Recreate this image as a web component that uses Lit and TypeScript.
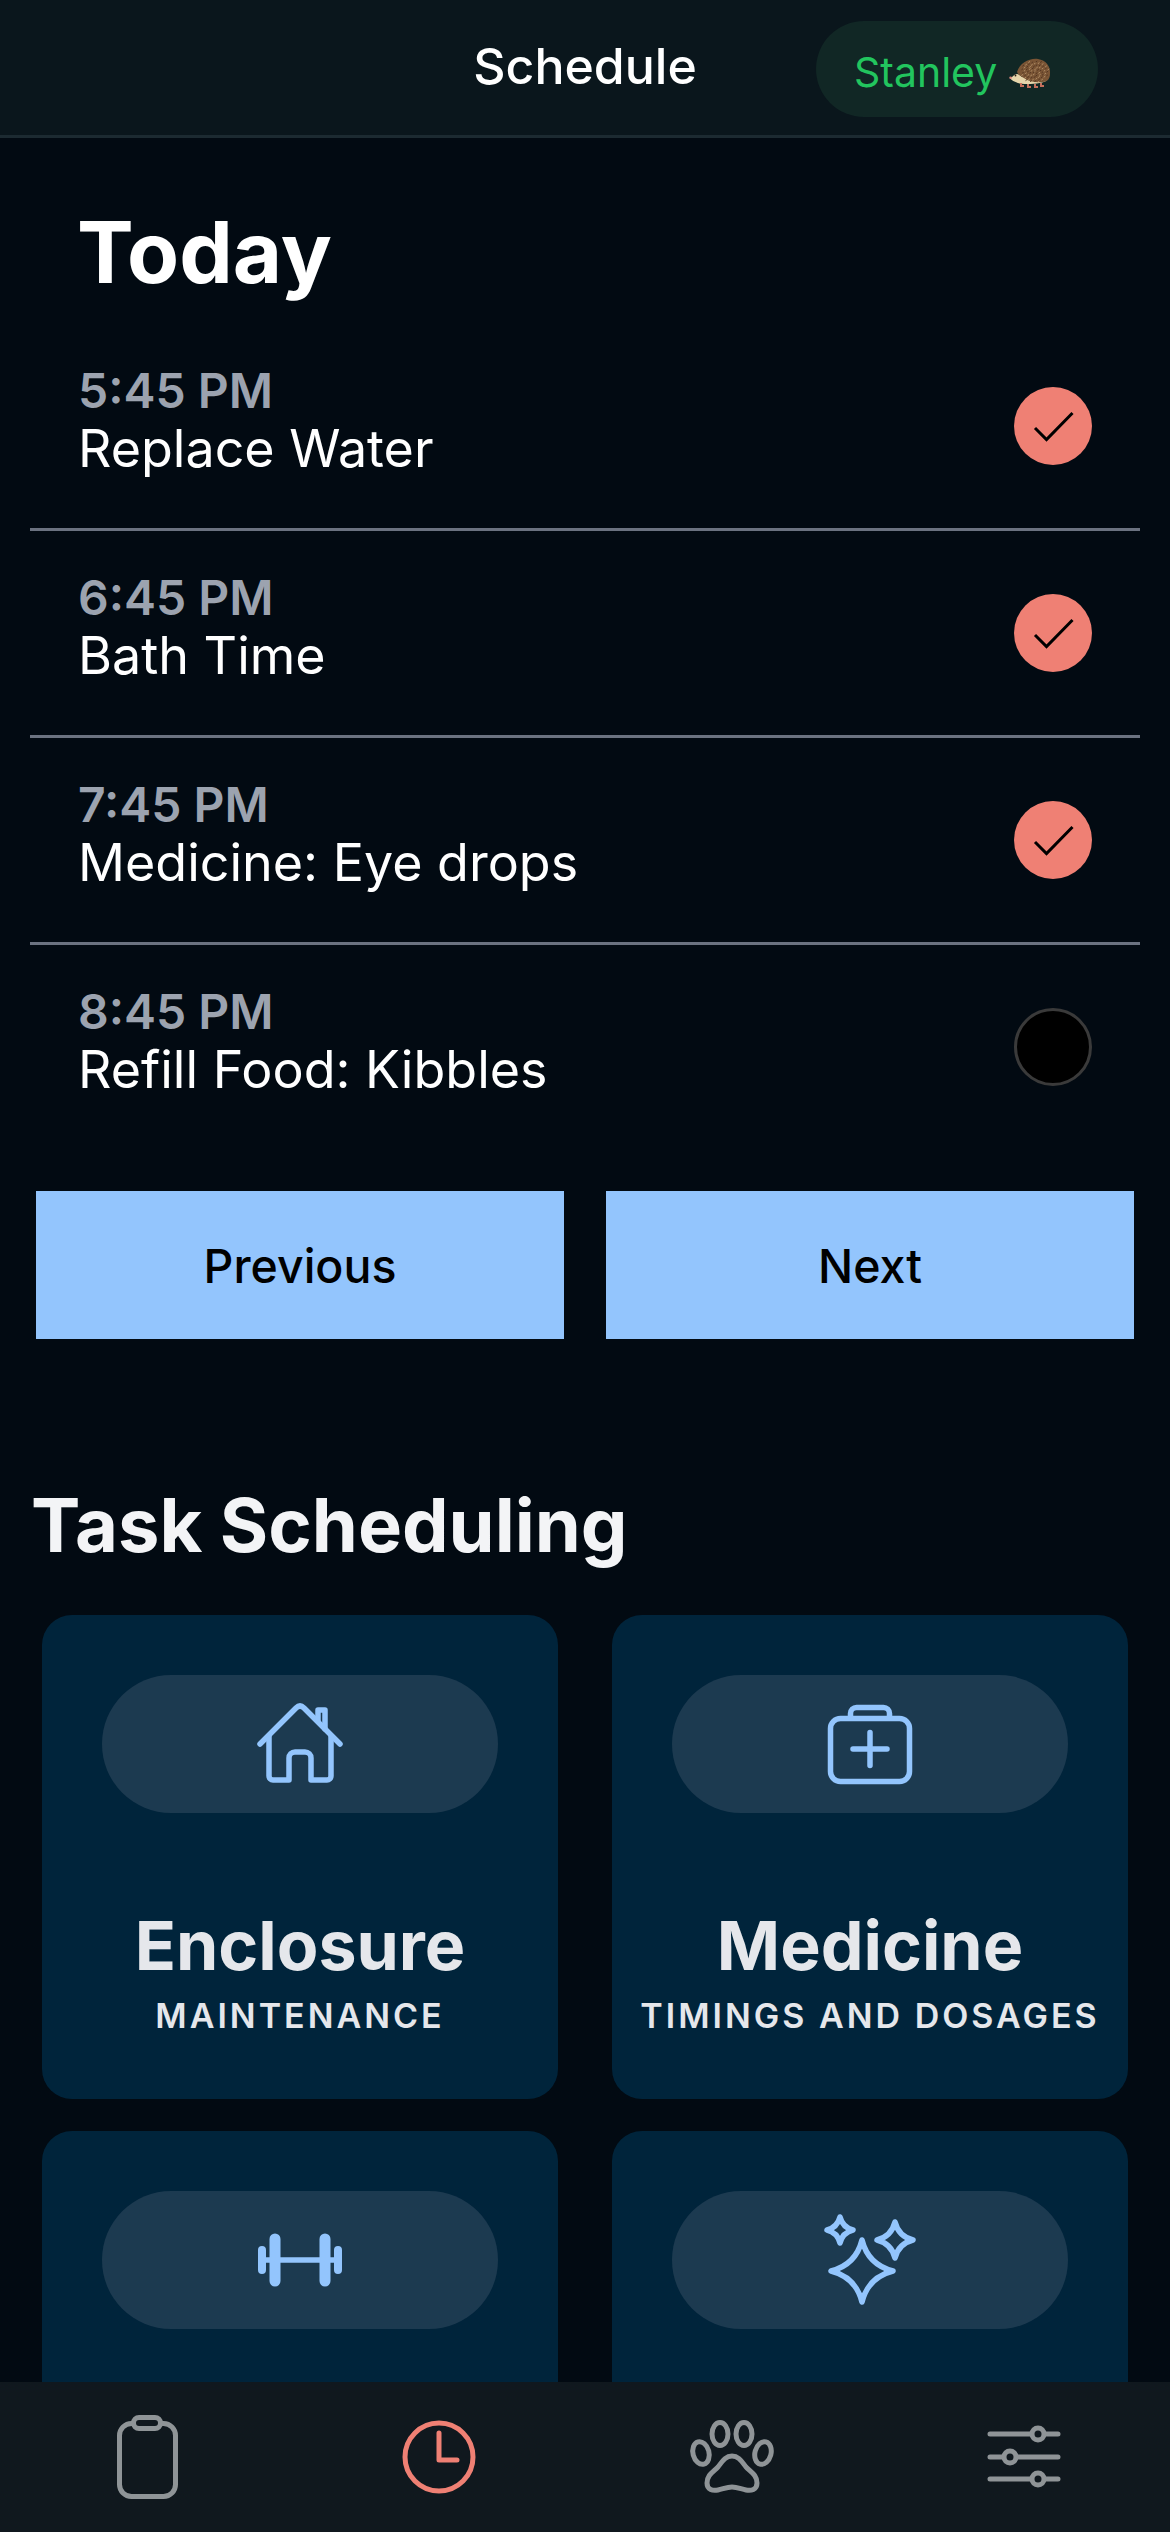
import { LitElement, html, css, svg } from "lit";
import { customElement } from "lit/decorators.js";

const star = (cx: number, cy: number, r: number, k = 0.2) => {
  const c = r * k;
  return `M${cx} ${cy - r}Q${cx + c} ${cy - c} ${cx + r} ${cy}Q${cx + c} ${cy + c} ${cx} ${cy + r}Q${cx - c} ${cy + c} ${cx - r} ${cy}Q${cx - c} ${cy - c} ${cx} ${cy - r}Z`;
};

const hedgehogSpikes = () => {
  const out = [];
  for (let i = 0; i < 70; i++) {
    const a = (i * 137.5 * Math.PI) / 180;
    const r = Math.sqrt(i / 70);
    const x = 25 + r * 14 * Math.cos(a);
    const y = 14 + r * 11 * Math.sin(a);
    out.push(svg`<line x1=${x.toFixed(1)} y1=${y.toFixed(1)} x2=${(x + 1.6).toFixed(1)} y2=${(y - 1.2).toFixed(1)} stroke=${i % 2 ? "#4f3320" : "#b3936c"} stroke-width="0.9"></line>`);
  }
  return out;
};

const hedgehog = html`<svg class="hog" viewBox="0 0 42 30" width="42" height="30" aria-hidden="true">
  <path d="M3 19 C7 15 9 15 13 19 L38 22 C36 26 14 27 9 25 C6 24 2 22 1 20Z" fill="#e6d5ab"></path>
  <path d="M8 14 C11 5 20 0 29 1 C37 2 42 9 41 16 C41 21 38 24 34 24 C28 25 20 24 15 20 C12 18 9 17 8 14Z" fill="#7a5535"></path>
  ${hedgehogSpikes()}
  <circle cx="1.6" cy="19.8" r="1.3" fill="#d98a80"></circle>
  <circle cx="6.5" cy="17.5" r="0.9" fill="#2a1a12"></circle>
  <path d="M12 25v3h3M19 26v3h3M26 26v3h3M32 25v3h3" stroke="#c46f5c" stroke-width="2" fill="none"></path>
</svg>`;

const check = html`<svg viewBox="0 0 78 78" width="78" height="78" aria-hidden="true">
  <path d="M21 41 L32.5 52.5 L58.5 26" fill="none" stroke="#000" stroke-width="3"></path>
</svg>`;

const ICONS = {
  house: html`<svg class="ic" viewBox="0 0 96 96" aria-hidden="true">
    <path d="M8 48 L44 12 Q48 8 52 12 L88 48"></path>
    <path d="M17 40 V80 a4 4 0 0 0 4 4 H37 V62 a6 6 0 0 1 6 -6 H53 a6 6 0 0 1 6 6 V84 H75 a4 4 0 0 0 4 -4 V40"></path>
    <path d="M66 25 V14 H73 V33"></path>
  </svg>`,
  kit: html`<svg class="ic" viewBox="0 0 96 96" aria-hidden="true">
    <rect x="8.5" y="22.5" width="79" height="63" rx="10"></rect>
    <path d="M28.5 22 V17.5 a6 6 0 0 1 6 -6 H61.5 a6 6 0 0 1 6 6 V22"></path>
    <path d="M48 36.5 V69.5 M31 53 H65"></path>
  </svg>`,
  dumbbell: html`<svg class="ic" viewBox="0 0 96 96" aria-hidden="true">
    <path d="M10 48 H86"></path>
    <path class="thick" d="M23 27 V69 M73 27 V69"></path>
    <path class="mid" d="M10 38 V58 M86 38 V58"></path>
  </svg>`,
  sparkles: html`<svg class="ic" viewBox="0 0 96 96" aria-hidden="true">
    <path d=${star(40, 59, 31)}></path>
    <path d=${star(18, 18, 13)}></path>
    <path d=${star(73, 28, 18)}></path>
  </svg>`,
};

const TASKS = [
  { time: "5:45 PM", title: "Replace Water", done: true },
  { time: "6:45 PM", title: "Bath Time", done: true },
  { time: "7:45 PM", title: "Medicine: Eye drops", done: true },
  { time: "8:45 PM", title: "Refill Food: Kibbles", done: false },
];

const CARDS = [
  { icon: ICONS.house, title: "Enclosure", sub: "MAINTENANCE" },
  { icon: ICONS.kit, title: "Medicine", sub: "TIMINGS AND DOSAGES" },
  { icon: ICONS.dumbbell, title: "", sub: "" },
  { icon: ICONS.sparkles, title: "", sub: "" },
];

@customElement("app-root")
export class AppRoot extends LitElement {
  static styles = css`
    :host {
      display: flex;
      flex-direction: column;
      width: 1170px;
      height: 2532px;
      overflow: hidden;
      background: #020a12;
      color: #fff;
      font-family: "Inter", "Liberation Sans", sans-serif;
    }
    .top {
      flex: none;
      height: 135px;
      border-bottom: 3px solid #1c2a31;
      background: #0a161c;
      display: grid;
      grid-template-columns: 1fr auto 1fr;
      align-items: start;
    }
    .top h1 {
      grid-column: 2;
      margin: 37px 0 0;
      font-size: 50px;
      line-height: 58px;
      font-weight: 500;
    }
    .pill {
      grid-column: 3;
      justify-self: end;
      margin: 21px 72px 0 0;
      width: 282px;
      height: 96px;
      box-sizing: border-box;
      padding: 5px 0 0 38px;
      border-radius: 48px;
      background: #112725;
      color: #22c55e;
      font-size: 41px;
      display: flex;
      align-items: center;
      gap: 12px;
    }
    .hog { flex: none; margin-top: 2px; }
    main { flex: 1; min-height: 0; overflow: hidden; }
    .today {
      margin: 0;
      padding: 65px 0 0 77px;
      height: 121px;
      font-size: 85px;
      line-height: 100px;
      font-weight: 700;
    }
    .list { margin: 0 30px; }
    .row {
      height: 207px;
      box-sizing: border-box;
      padding: 0 48px 10px 48px;
      display: flex;
      align-items: center;
      justify-content: space-between;
      border-bottom: 3px solid #6b7280;
    }
    .row:last-child { border-bottom-color: transparent; }
    .time {
      font-size: 48px;
      line-height: 56px;
      font-weight: 600;
      color: #9ca3af;
    }
    .name { font-size: 52px; line-height: 60px; font-weight: 400; }
    .dot {
      width: 78px;
      height: 78px;
      margin-top: 10px;
      border-radius: 50%;
      background: #ef8074;
      flex: none;
    }
    .dot svg { display: block; }
    .dot.off {
      box-sizing: border-box;
      background: #000;
      border: 3px solid #3a3a3a;
    }
    .btns {
      margin: 39px 36px 0;
      display: grid;
      grid-template-columns: 1fr 1fr;
      gap: 42px;
    }
    .btn {
      height: 148px;
      padding-top: 2px;
      box-sizing: border-box;
      display: flex;
      align-items: center;
      justify-content: center;
      background: #93c5fd;
      color: #000;
      font-size: 46.5px;
      font-weight: 500;
    }
    h2 {
      margin: 141px 0 0 31px;
      font-size: 74px;
      line-height: 90px;
      font-weight: 700;
      color: #f3f4f6;
    }
    .cards {
      margin: 45px 42px 0;
      display: grid;
      grid-template-columns: 516px 516px;
      gap: 32px 54px;
    }
    .card {
      height: 484px;
      box-sizing: border-box;
      padding: 60px 60px 0;
      border-radius: 30px;
      background: #00243b;
      text-align: center;
      color: #e5e7eb;
    }
    .icon {
      height: 138px;
      border-radius: 69px;
      background: #1c3a50;
      display: flex;
      align-items: center;
      justify-content: center;
    }
    .ic {
      width: 96px;
      height: 96px;
      fill: none;
      stroke: #93c5fd;
      stroke-width: 5.5;
      stroke-linecap: round;
      stroke-linejoin: round;
    }
    .ic .thick { stroke-width: 11; }
    .ic .mid { stroke-width: 8; }
    .ct {
      margin-top: 90px;
      font-size: 68px;
      line-height: 84px;
      font-weight: 700;
    }
    .cs {
      margin: 7px -60px 0;
      font-size: 34px;
      line-height: 44px;
      font-weight: 600;
      letter-spacing: 3px;
    }
    nav {
      flex: none;
      height: 150px;
      background: #10181e;
      display: grid;
      grid-template-columns: repeat(4, 1fr);
      align-items: center;
      justify-items: center;
    }
    .nv {
      width: 96px;
      height: 96px;
      fill: none;
      stroke: #8f9497;
      stroke-width: 5;
      stroke-linecap: round;
      stroke-linejoin: round;
    }
    .nv.on { stroke: #ef8074; }
    .nv .knob { fill: #10181e; }
  `;

  render() {
    return html`
      <header class="top">
        <h1>Schedule</h1>
        <div class="pill"><span>Stanley</span>${hedgehog}</div>
      </header>
      <main>
        <div class="today">Today</div>
        <div class="list">
          ${TASKS.map(
            (t) => html`<div class="row">
              <div>
                <div class="time">${t.time}</div>
                <div class="name">${t.title}</div>
              </div>
              ${t.done ? html`<div class="dot">${check}</div>` : html`<div class="dot off"></div>`}
            </div>`
          )}
        </div>
        <div class="btns">
          <div class="btn">Previous</div>
          <div class="btn">Next</div>
        </div>
        <h2>Task Scheduling</h2>
        <div class="cards">
          ${CARDS.map(
            (c) => html`<div class="card">
              <div class="icon">${c.icon}</div>
              ${c.title ? html`<div class="ct">${c.title}</div><div class="cs">${c.sub}</div>` : ""}
            </div>`
          )}
        </div>
      </main>
      <nav>
        <svg class="nv" viewBox="0 0 96 96" aria-hidden="true">
          <path d="M35 14.5 H33.5 a12 12 0 0 0 -12 12 V75.5 a12 12 0 0 0 12 12 H65.5 a12 12 0 0 0 12 -12 V26.5 a12 12 0 0 0 -12 -12 H63"></path>
          <rect x="35.5" y="8.5" width="27" height="11" rx="5.5"></rect>
        </svg>
        <svg class="nv on" viewBox="0 0 96 96" aria-hidden="true">
          <circle cx="48" cy="48" r="34"></circle>
          <path d="M48 24 V51 H66"></path>
        </svg>
        <svg class="nv" viewBox="0 0 96 96" aria-hidden="true">
          <ellipse cx="37" cy="25" rx="8" ry="11.5"></ellipse>
          <ellipse cx="61" cy="25" rx="8" ry="11.5"></ellipse>
          <ellipse cx="18" cy="44" rx="8" ry="11.5" transform="rotate(-15 18 44)"></ellipse>
          <ellipse cx="80" cy="44" rx="8" ry="11.5" transform="rotate(15 80 44)"></ellipse>
          <path d="M49 47 C42 47 39 53 35 58 C30 63 24 66 24 74 C24 81 30 82 35 81 C40 80 44 78 49 78 C54 78 58 80 63 81 C68 82 74 81 74 74 C74 66 68 63 63 58 C59 53 56 47 49 47Z"></path>
        </svg>
        <svg class="nv" viewBox="0 0 96 96" aria-hidden="true">
          <path d="M14 25 H82 M14 48 H82 M14 70 H82"></path>
          <circle class="knob" cx="62" cy="25" r="6"></circle>
          <circle class="knob" cx="34" cy="48" r="6"></circle>
          <circle class="knob" cx="62" cy="70" r="6"></circle>
        </svg>
      </nav>
    `;
  }
}
